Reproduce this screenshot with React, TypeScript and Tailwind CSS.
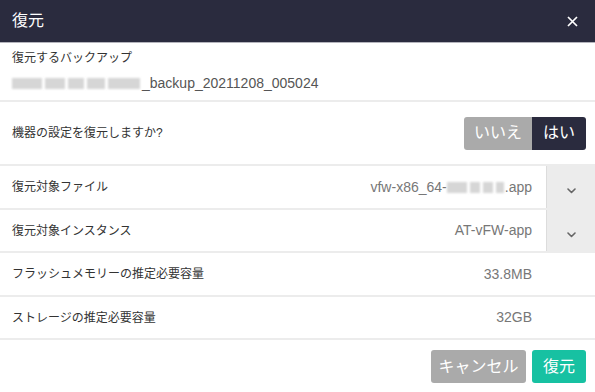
import React from "react";

const font = { fontFamily: '"Liberation Sans", "Noto Sans CJK JP", sans-serif' };

function Blur({ w }: { w: number[] }) {
  return (
    <span className="inline-flex items-center gap-[3px] align-middle">
      {w.map((x, i) => (
        <span key={i} className="inline-block h-[11px] bg-[#d6d6d6] blur-[1px]" style={{ width: x }} />
      ))}
    </span>
  );
}

function Chevron() {
  return (
    <svg width="9" height="6" viewBox="0 0 9 6" fill="none">
      <path d="M1 1l3.5 3.5L8 1" stroke="#666" strokeWidth="1.6" strokeLinecap="round" strokeLinejoin="round" />
    </svg>
  );
}

function Row({
  label,
  value,
  dropdown,
  h,
}: {
  label: string;
  value: React.ReactNode;
  dropdown?: boolean;
  h: string;
}) {
  return (
    <div className={`flex items-stretch border-b-2 border-[#ececec] ${h}`}>
      <div className="flex flex-1 items-center pl-3 text-[12px] text-[#333]">{label}</div>
      <div className="flex items-center pr-[14px] text-[14px] text-[#777]">{value}</div>
      {dropdown ? (
        <div className="flex w-[49px] items-center justify-center border-l border-[#dcdcdc] bg-[#ececec] pt-[8px]">
          <Chevron />
        </div>
      ) : (
        <div className="w-[49px]" />
      )}
    </div>
  );
}

export default function App() {
  return (
    <div className="h-[392px] w-[595px] overflow-hidden bg-white" style={font}>
      {/* Header */}
      <div className="flex h-[43px] items-center justify-between border-b border-[#b4b4bc] bg-[#2a2b3e] pl-3 pr-[17px]">
        <span className="text-[16px] text-white">復元</span>
        <svg width="11" height="11" viewBox="0 0 11 11">
          <path d="M1 1l9 9M10 1L1 10" stroke="#fff" strokeWidth="1.7" />
        </svg>
      </div>

      {/* Backup */}
      <div className="flex h-[59px] flex-col border-b-2 border-[#ececec] pl-3 pt-[8px]">
        <span className="text-[12px] leading-[15px] text-[#333]">復元するバックアップ</span>
        <span className="mt-[9px] flex items-center text-[14px] leading-[16px] text-[#555]">
          <Blur w={[30, 20, 16, 18, 32]} />
          <span className="ml-[2px]">_backup_20211208_005024</span>
        </span>
      </div>

      {/* Confirm */}
      <div className="flex h-[64px] items-center justify-between border-b-2 border-[#ececec] pl-3 pr-[9px]">
        <span className="text-[12px] text-[#333]">機器の設定を復元しますか?</span>
        <div className="flex h-[33px] overflow-hidden rounded-[3px] text-[16px] text-white">
          <div className="flex w-[68px] items-center justify-center bg-[#aaaaaa]">いいえ</div>
          <div className="flex w-[54px] items-center justify-center bg-[#2a2b3e]">はい</div>
        </div>
      </div>

      <Row
        h="h-[44px]"
        label="復元対象ファイル"
        dropdown
        value={
          <span className="flex items-center">
            vfw-x86_64-
            <Blur w={[20, 10, 10, 8]} />
            <span className="ml-[1px]">.app</span>
          </span>
        }
      />
      <Row h="h-[43px]" label="復元対象インスタンス" dropdown value="AT-vFW-app" />
      <Row h="h-[44px]" label="フラッシュメモリーの推定必要容量" value="33.8MB" />
      <Row h="h-[43px]" label="ストレージの推定必要容量" value="32GB" />

      {/* Footer */}
      <div className="flex justify-end gap-[6px] pr-[9px] pt-[10px]">
        <button className="h-[33px] w-[95px] rounded-[3px] bg-[#aaaaaa] text-[16px] text-white">キャンセル</button>
        <button className="h-[33px] w-[54px] rounded-[3px] bg-[#17c1a2] text-[16px] text-white">復元</button>
      </div>
    </div>
  );
}
